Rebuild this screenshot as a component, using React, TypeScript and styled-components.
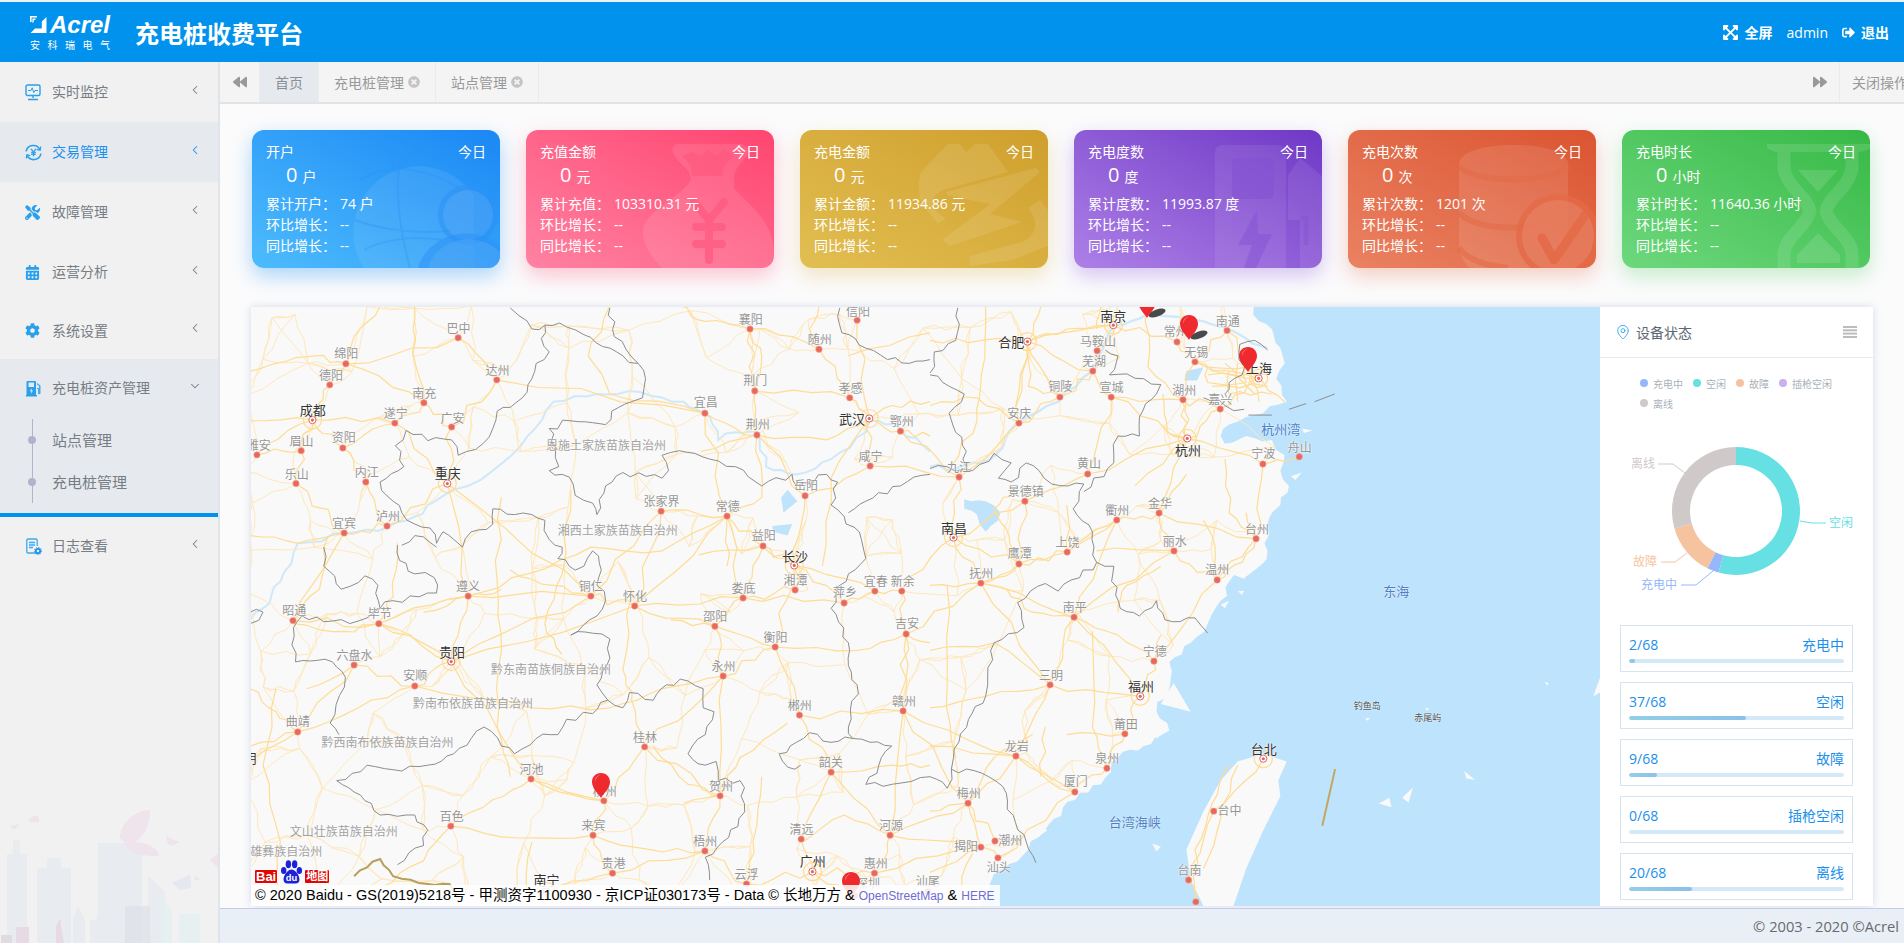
import React from "react";
import styled, { createGlobalStyle } from "styled-components";
import {
  FaBackward,
  FaCalendarAlt,
  FaCog,
  FaExpandArrowsAlt,
  FaForward,
  FaSignOutAlt,
  FaTimesCircle,
  FaTools,
} from "react-icons/fa";
import { ChevronDown, ChevronLeft, MapPin } from "lucide-react";

const GlobalStyle = createGlobalStyle`
  html, body {
    margin: 0;
    padding: 0;
    height: 100%;
    overflow: hidden;
    background: #fff;
    font-family: "Open Sans", "Noto Sans CJK SC", sans-serif;
    font-size: 14px;
  }
  * { box-sizing: border-box; }
`;

// Layout
const Page = styled.div`
  width: 1904px;
  height: 943px;
  display: flex;
  flex-direction: column;
  overflow: hidden;
`;

const Header = styled.header`
  flex: 0 0 62px;
  display: flex;
  align-items: center;
  background: #0092ec;
  border-top: 2px solid #eef2f5;
  color: #fff;
  padding: 0 15px 0 30px;
`;

const LogoBox = styled.div`
  width: 85px;
  display: flex;
  flex-direction: column;
  margin-right: 20px;
`;

const LogoTop = styled.div`
  display: flex;
  align-items: center;
  gap: 3px;
  height: 22px;
`;

const LogoWord = styled.span`
  font-family: "Liberation Sans", sans-serif;
  font-style: italic;
  font-weight: 700;
  font-size: 24px;
  line-height: 22px;
`;

const LogoSub = styled.span`
  font-size: 10px;
  line-height: 12px;
  margin-top: 3px;
  letter-spacing: 7.5px;
  white-space: nowrap;
`;

const Title = styled.h1`
  margin: 0;
  font-size: 24px;
  font-weight: 700;
`;

const HeaderRight = styled.div`
  margin-left: auto;
  display: flex;
  align-items: center;
  font-size: 14px;
`;

const HeaderBold = styled.span`
  font-weight: 700;
  margin-left: 6px;
`;

const HeaderUser = styled.span`
  margin: 0 14px;
`;

const Body = styled.div`
  flex: 1;
  display: flex;
  min-height: 0;
`;

// Sidebar
const Sidebar = styled.aside`
  position: relative;
  flex: 0 0 220px;
  background: #f1f1f1;
  border-right: 2px solid #dfe4e8;
  overflow: hidden;
`;

const SideItem = styled.div<{ $active?: boolean; $height?: number }>`
  position: relative;
  z-index: 1;
  height: ${(p) => p.$height ?? 60}px;
  display: flex;
  align-items: center;
  padding: 0 18px 0 25px;
  background: ${(p) => (p.$active ? "#e6eaef" : "transparent")};
  color: ${(p) => (p.$active ? "#1b90ed" : "#777d85")};
`;

const SideIcon = styled.span`
  width: 27px;
  display: flex;
  align-items: center;
  color: #2a9fea;
  font-size: 15px;
`;

const SideLabel = styled.span`
  flex: 1;
  font-size: 14px;
  margin-top: -2px;
`;

const SideArrow = styled.span`
  display: flex;
  margin-top: -5px;
  margin-right: -2px;
`;

const SideGroup = styled.div`
  position: relative;
  z-index: 1;
  background: #e6eaef;
  height: 158px;
  border-bottom: 4px solid #0092ec;
`;

const SubList = styled.div`
  position: relative;
  margin-top: 2px;
  height: 84px;
  &::before {
    content: "";
    position: absolute;
    left: 32px;
    top: 0;
    bottom: 0;
    width: 1px;
    background: #b3b3cc;
  }
`;

const SubItem = styled.div`
  position: relative;
  height: 42px;
  line-height: 42px;
  padding-left: 52px;
  font-size: 15px;
  color: #777d85;
  &::before {
    content: "";
    position: absolute;
    left: 28px;
    top: 17px;
    width: 8px;
    height: 8px;
    border-radius: 50%;
    background: #b3b3cc;
  }
`;

const SideArt = styled.svg`
  position: absolute;
  left: 0;
  bottom: 0;
  width: 218px;
  height: 163px;
  opacity: 0.65;
`;

// Main area
const Main = styled.main`
  flex: 1;
  min-width: 0;
  display: flex;
  flex-direction: column;
`;

const TabBar = styled.div`
  flex: 0 0 42px;
  display: flex;
  background: #f4f4f4;
  border-bottom: 2px solid #dfe4e8;
  color: #999;
  font-size: 14px;
`;

const TabArrow = styled.div`
  flex: none;
  width: 40px;
  display: flex;
  align-items: center;
  justify-content: center;
  color: #999;
  font-size: 14px;
  border-right: 1px solid #ebebeb;
`;

const Tab = styled.div<{ $active?: boolean }>`
  display: flex;
  align-items: center;
  gap: 4px;
  padding: 0 15px;
  background: ${(p) => (p.$active ? "#e6eaef" : "transparent")};
  border-right: 1px solid #ebebeb;
  color: ${(p) => (p.$active ? "#8a8f96" : "#999")};
  svg {
    color: #c4c4c4;
    font-size: 12px;
  }
`;

const TabRight = styled.div`
  margin-left: auto;
  display: flex;
  width: 104px;
  overflow: hidden;
`;

const CloseOps = styled.div`
  flex: none;
  display: flex;
  align-items: center;
  padding-left: 12px;
  white-space: nowrap;
`;

const Content = styled.div`
  flex: 1;
  min-height: 0;
  background: #fbfbfc;
  padding: 26px 0 0 31px;
  overflow: hidden;
`;

const CardRow = styled.div`
  display: flex;
  gap: 26px;
  margin-left: 1px;
`;

const Card = styled.div<{ $from: string; $to: string; $glow: string }>`
  position: relative;
  width: 248px;
  height: 138px;
  padding: 12px 14px;
  border-radius: 12px;
  color: #fff;
  background: linear-gradient(to top right, ${(p) => p.$from}, ${(p) => p.$to});
  box-shadow: 0 8px 20px ${(p) => p.$glow};
`;

const CardArt = styled.svg`
  position: absolute;
  left: 0;
  top: 0;
  width: 248px;
  height: 138px;
  border-radius: 12px;
`;

const CardHead = styled.div`
  position: relative;
  display: flex;
  justify-content: space-between;
  line-height: 20px;
`;

const CardNow = styled.div`
  position: relative;
  display: flex;
  align-items: baseline;
  gap: 5px;
  padding-left: 20px;
  height: 28px;
  margin: -1px 0 4px;
  line-height: 28px;
`;

const CardNum = styled.span`
  font-size: 20px;
`;

const CardLine = styled.div`
  position: relative;
  display: flex;
  line-height: 21px;
  white-space: nowrap;
`;

const CardKey = styled.span`
  width: 74px;
`;

const MapPanel = styled.div`
  display: flex;
  width: 1622px;
  height: 599px;
  margin-top: 39px;
  background: #fff;
  box-shadow: 0 0 8px rgba(110, 135, 175, 0.28);
`;

const MapCanvas = styled.div`
  position: relative;
  flex: 0 0 1349px;
  height: 599px;
  overflow: hidden;
  background: #f9f9f9;
`;

const MapLayer = styled.svg`
  position: absolute;
  left: 0;
  top: 0;
`;

const CityName = styled.span<{ $cap?: boolean }>`
  position: absolute;
  transform: translate(-50%, -50%);
  font-size: ${(p) => (p.$cap ? 13 : 12)}px;
  line-height: 14px;
  white-space: nowrap;
  color: ${(p) => (p.$cap ? "#333" : "#969696")};
  text-shadow: 0 0 2px #fff, 0 0 2px #fff;
`;

const RegionName = styled.span`
  position: absolute;
  transform: translate(-50%, -50%);
  font-size: 12px;
  line-height: 14px;
  white-space: nowrap;
  color: #a2a2a2;
  text-shadow: 0 0 2px #fff;
`;

const SeaName = styled.span<{ $small?: boolean }>`
  position: absolute;
  transform: translate(-50%, -50%);
  font-size: ${(p) => (p.$small ? 9 : 13)}px;
  line-height: 14px;
  white-space: nowrap;
  color: ${(p) => (p.$small ? "#555" : "#4f7fc6")};
  text-shadow: 0 0 2px #fff;
`;

const Pin = styled.svg`
  position: absolute;
  width: 20px;
  height: 26px;
  overflow: visible;
  transform: translate(-50%, -100%);
`;

const BaiduLogo = styled.div`
  position: absolute;
  left: 3px;
  bottom: 22px;
  display: flex;
  align-items: flex-end;
  gap: 0;
  height: 25px;
  font-family: "Liberation Sans", "Noto Sans CJK SC", sans-serif;
  font-weight: 700;
`;

const BaiduWord = styled.span`
  padding: 0 1px;
  background: #e10601;
  border: 1px solid #fff;
  border-radius: 2px;
  color: #fff;
  font-size: 13px;
  line-height: 13px;
`;

const BaiduMap = styled.span`
  padding: 0 1px;
  background: #e10601;
  border: 1px solid #fff;
  border-radius: 2px;
  color: #fff;
  font-size: 11px;
  line-height: 13px;
`;

const CopyRight = styled.div`
  position: absolute;
  left: 0;
  bottom: 0;
  width: 749px;
  height: 21px;
  padding-left: 4px;
  background: rgba(255, 255, 255, 0.85);
  font-family: "Liberation Sans", "Noto Sans CJK SC", sans-serif;
  font-size: 14.5px;
  line-height: 21px;
  color: #000;
  white-space: nowrap;
`;

const CopyLink = styled.span`
  font-size: 12px;
  color: #6f6cd3;
`;

// Status panel
const StatusPanel = styled.div`
  flex: 1;
  min-width: 0;
  display: flex;
  flex-direction: column;
`;

const StatusHead = styled.div`
  height: 51px;
  display: flex;
  align-items: center;
  padding: 0 16px 0 15px;
  border-bottom: 1px solid #e7eaee;
  color: #5c6773;
  font-size: 14px;
`;

const StatusTitle = styled.span`
  flex: 1;
  margin-left: 5px;
`;

const Legend = styled.div`
  display: flex;
  flex-wrap: wrap;
  gap: 0 10px;
  padding: 15px 30px 0 40px;
`;

const LegendItem = styled.div`
  display: flex;
  align-items: center;
  gap: 5px;
  height: 20px;
  font-size: 10px;
  color: #a9b1ba;
`;

const LegendDot = styled.i<{ $color: string }>`
  width: 8px;
  height: 8px;
  border-radius: 50%;
  background: ${(p) => p.$color};
`;

const DonutBox = styled.svg`
  display: block;
  width: 272px;
  height: 212px;
`;

const StatList = styled.div`
  display: flex;
  flex-direction: column;
  gap: 10px;
  margin: 0 20px;
`;

const StatBox = styled.div`
  height: 47px;
  padding: 8px 8px 0;
  border: 1px solid #d7e3ef;
  color: #1b90ed;
  font-size: 14px;
`;

const StatText = styled.div`
  display: flex;
  justify-content: space-between;
  line-height: 22px;
`;

const StatTrack = styled.div`
  height: 4px;
  margin-top: 3px;
  border-radius: 2px;
  background: #d3e9f7;
  overflow: hidden;
`;

const StatFill = styled.div`
  height: 100%;
  border-radius: 2px;
  background: linear-gradient(to right, #92cfe6, #8cc0ea);
`;

const Footer = styled.footer`
  flex: 0 0 35px;
  padding-right: 5px;
  background: #e8eff7;
  border-top: 1px solid #c5cbe6;
  text-align: right;
  line-height: 34px;
  font-size: 14.7px;
  color: #686b6d;
`;

// Map data: positions traced in two grids, then projected to map pixels
type Pt = [number, number];
const w = (x: number, y: number): Pt => [x / 2.306 - 1, y / 2.613 - 1];
const e = (x: number, y: number): Pt => [679 + x / 2.34, y / 2.613 - 1];

const rnd = (n: number) => {
  const v = Math.sin(n * 12.9898) * 43758.5453;
  return v - Math.floor(v);
};

const toPts = (fn: (x: number, y: number) => Pt, list: number[]) => {
  const out: Pt[] = [];
  for (let i = 0; i < list.length; i += 2) out.push(fn(list[i], list[i + 1]));
  return out;
};

const str = (list: Pt[]) => list.map((p) => `${p[0].toFixed(1)},${p[1].toFixed(1)}`).join(" ");
const pts = (fn: (x: number, y: number) => Pt, list: number[]) => str(toPts(fn, list));

// breaks each segment up so borders and roads do not run dead straight
const wiggle = (list: Pt[], amp: number, seed: number, parts = 3) => {
  const out: Pt[] = [list[0]];
  for (let i = 1; i < list.length; i++) {
    const a = list[i - 1];
    const b = list[i];
    const dx = b[0] - a[0];
    const dy = b[1] - a[1];
    const len = Math.hypot(dx, dy) || 1;
    const steps = Math.max(1, Math.round(Math.min(len / 8, parts)));
    for (let k = 1; k < steps; k++) {
      const t = k / steps;
      const off = (rnd(seed + i * 31 + k * 7) - 0.5) * 2 * amp;
      out.push([a[0] + dx * t - (dy / len) * off, a[1] + dy * t + (dx / len) * off]);
    }
    out.push(b);
  }
  return out;
};

type City = [string, number, number, number, number, number?];

const westCities: City[] = [
  ["巴中", 480, 83, 481, 60], ["绵阳", 221, 151, 222, 126], ["德阳", 184, 206, 187, 183],
  ["达州", 569, 193, 571, 170], ["南充", 401, 253, 402, 231], ["成都", 144, 298, 145, 271, 1],
  ["遂宁", 334, 306, 336, 281], ["广安", 465, 316, 467, 294], ["雅安", 16, 389, 20, 366],
  ["眉山", 118, 378, 119, 355], ["资阳", 214, 371, 216, 346], ["乐山", 106, 464, 108, 441],
  ["内江", 267, 460, 269, 437], ["重庆", 455, 464, 456, 436, 1], ["宜宾", 217, 593, 217, 570],
  ["泸州", 316, 575, 318, 551], ["昭通", 99, 822, 102, 797], ["毕节", 297, 830, 299, 804],
  ["遵义", 503, 758, 503, 735], ["铜仁", 786, 758, 786, 733], ["怀化", 887, 784, 888, 760],
  ["贵阳", 464, 929, 466, 904, 1], ["六盘水", 240, 938, 241, 915], ["安顺", 380, 993, 381, 968],
  ["曲靖", 110, 1113, 110, 1088], ["昆明", -30, 1210, -15, 1180, 1], ["河池", 648, 1236, 649, 1213],
  ["柳州", 816, 1293, 818, 1270], ["桂林", 910, 1152, 911, 1128], ["百色", 463, 1359, 465, 1335],
  ["来宾", 791, 1383, 792, 1358], ["贺州", 1084, 1280, 1086, 1257], ["贵港", 836, 1482, 838, 1458],
  ["梧州", 1049, 1424, 1050, 1401], ["南宁", 684, 1530, 684, 1499, 1], ["云浮", 1145, 1510, 1145, 1488],
  ["广州", 1297, 1478, 1298, 1451, 1], ["韶关", 1340, 1218, 1339, 1194], ["清远", 1271, 1393, 1272, 1369],
  ["河源", 1476, 1383, 1478, 1359], ["惠州", 1440, 1482, 1443, 1457], ["深圳", 1395, 1540, 1425, 1510],
  ["郴州", 1267, 1069, 1268, 1044], ["永州", 1091, 967, 1092, 942], ["衡阳", 1211, 891, 1212, 867],
  ["邵阳", 1072, 837, 1073, 813], ["娄底", 1137, 763, 1138, 740], ["湘潭", 1257, 742, 1258, 718],
  ["长沙", 1255, 678, 1257, 652, 1], ["益阳", 1183, 627, 1185, 602], ["常德", 1100, 549, 1102, 524],
  ["张家界", 948, 536, 949, 511], ["岳阳", 1280, 496, 1282, 471], ["咸宁", 1430, 418, 1431, 394],
  ["鄂州", 1500, 327, 1503, 303], ["武汉", 1428, 294, 1388, 295, 1], ["孝感", 1383, 240, 1385, 217],
  ["荆州", 1169, 337, 1171, 312], ["荆门", 1164, 222, 1165, 197], ["宜昌", 1049, 280, 1051, 254],
  ["襄阳", 1153, 60, 1155, 36], ["随州", 1312, 113, 1314, 90], ["信阳", 1400, 37, 1402, 15],
  ["萍乡", 1370, 776, 1372, 751], ["宜春", 1441, 745, 1443, 720], ["新余", 1503, 745, 1505, 720],
  ["吉安", 1513, 857, 1515, 832], ["赣州", 1506, 1058, 1508, 1035],
];

const eastCities: City[] = [
  ["南京", 429, 50, 429, 26, 1], ["合肥", 228, 93, 190, 93, 1], ["马鞍山", 391, 117, 393, 93],
  ["芜湖", 381, 170, 384, 146], ["铜陵", 304, 238, 305, 212], ["宣城", 424, 238, 425, 213],
  ["安庆", 208, 306, 209, 282], ["常州", 578, 94, 575, 68], ["无锡", 620, 146, 623, 122],
  ["南通", 695, 64, 697, 41], ["上海", 769, 189, 770, 163, 1], ["湖州", 592, 245, 595, 221],
  ["嘉兴", 679, 269, 679, 245], ["杭州", 602, 346, 604, 376, 1], ["宁波", 779, 413, 780, 388],
  ["舟山", 864, 394, 865, 371], ["黄山", 369, 439, 372, 414], ["九江", 68, 447, 68, 423],
  ["景德镇", 222, 510, 224, 487], ["衢州", 437, 559, 438, 535], ["金华", 536, 541, 538, 517],
  ["南昌", 55, 605, 56, 579, 1], ["上饶", 321, 643, 322, 618], ["鹰潭", 208, 674, 210, 649],
  ["丽水", 571, 640, 573, 616], ["台州", 763, 608, 765, 586], ["温州", 672, 716, 672, 691],
  ["抚州", 119, 724, 120, 699], ["南平", 337, 813, 339, 790], ["宁德", 524, 928, 526, 903],
  ["三明", 281, 990, 283, 966], ["福州", 492, 1020, 494, 994, 1], ["莆田", 456, 1118, 458, 1094],
  ["龙岩", 201, 1176, 203, 1153], ["泉州", 414, 1208, 415, 1184], ["厦门", 339, 1270, 341, 1245],
  ["梅州", 89, 1299, 91, 1275], ["揭阳", 119, 1414, 84, 1414], ["潮州", 152, 1398, 188, 1397],
  ["汕头", 159, 1442, 161, 1469], ["汕尾", -5, 1530, -5, 1505], ["台北", 780, 1183, 781, 1157, 1],
  ["台中", 664, 1320, 701, 1320], ["台南", 605, 1500, 607, 1476], ["高雄", 622, 1557, 622, 1640],
];

const regions: [string, number, number][] = [
  ["恩施土家族苗族自治州", 821, 367], ["湘西土家族苗族自治州", 848, 587],
  ["黔东南苗族侗族自治州", 694, 950], ["黔南布依族苗族自治州", 514, 1041],
  ["黔西南布依族苗族自治州", 317, 1143], ["文山壮族苗族自治州", 216, 1374],
  ["楚雄彝族自治州", 70, 1426],
];

const capitals = new Set([...westCities, ...eastCities].filter((c) => c[5]).map((c) => c[0]));

const nodes: Record<string, Pt> = {};
westCities.forEach((c) => { nodes[c[0]] = w(c[1], c[2]); });
eastCities.forEach((c) => { nodes[c[0]] = e(c[1], c[2]); });

const chains = [
  "成都,德阳,绵阳,巴中", "成都,遂宁,重庆", "成都,资阳,内江,泸州", "成都,眉山,乐山,宜宾,泸州,重庆",
  "雅安,成都", "雅安,眉山", "绵阳,南充,广安,重庆", "巴中,达州,广安", "南充,遂宁,资阳", "达州,宜昌",
  "重庆,遵义,贵阳,安顺,六盘水,曲靖,昆明", "毕节,贵阳", "昭通,毕节,遵义", "昭通,宜宾", "重庆,铜仁,怀化,邵阳,衡阳",
  "贵阳,铜仁", "贵阳,怀化,娄底,湘潭,长沙", "贵阳,河池,柳州,来宾,贵港,南宁", "柳州,桂林,永州,衡阳,长沙,岳阳,咸宁,武汉",
  "桂林,贺州,梧州,贵港", "衡阳,郴州,韶关,清远,广州,深圳", "广州,云浮,梧州", "广州,惠州,河源,赣州,吉安,新余,宜春,萍乡,长沙",
  "萍乡,娄底", "武汉,孝感,随州,襄阳,荆门,荆州,宜昌", "武汉,鄂州,九江,南昌", "宜昌,常德,益阳,长沙", "张家界,常德",
  "张家界,怀化", "荆州,岳阳", "常德,娄底,邵阳,永州", "信阳,武汉", "南昌,新余", "南昌,抚州,三明",
  "南昌,鹰潭,上饶,衢州,金华,杭州,嘉兴,上海", "鹰潭,抚州", "三明,福州", "南昌,景德镇,黄山,杭州",
  "九江,安庆,合肥,南京,常州,无锡,上海", "安庆,铜陵,芜湖,马鞍山,南京", "合肥,芜湖,宣城,湖州,无锡,南通", "南通,上海",
  "湖州,杭州,宁波,舟山", "宁波,台州,温州,宁德,福州,莆田,泉州,厦门,汕头,揭阳,惠州,深圳", "潮州,梅州,龙岩,厦门",
  "龙岩,三明,南平,丽水,金华", "南平,福州", "丽水,温州", "赣州,龙岩", "赣州,梅州,河源", "台北,台中,台南,高雄",
  "衢州,南平", "黄山,宣城", "景德镇,鹰潭", "吉安,赣州,郴州", "吉安,抚州", "金华,台州", "抚州,南平", "揭阳,河源",
  "孝感,荆门", "咸宁,九江", "长沙,宜春", "益阳,娄底", "永州,贺州", "韶关,河源", "合肥,安庆", "铜陵,合肥",
  "嘉兴,湖州", "宣城,杭州", "铜仁,张家界", "怀化,常德", "遵义,铜仁",
];

const westRoads = [
  [0, 170, 60, 150, 150, 130, 221, 151], [0, 300, 144, 298], [0, 600, 110, 620, 217, 593], [300, 0, 240, 80, 221, 151],
  [380, 0, 375, 120, 401, 253], [830, 0, 780, 130, 830, 230, 1049, 280], [990, 0, 1050, 40, 1153, 60],
  [1153, 60, 1180, 130, 1164, 222], [1169, 337, 1180, 500, 1100, 549], [1312, 0, 1290, 60, 1312, 113], [1568, 250, 1480, 260, 1428, 294],
  [1568, 340, 1500, 327], [0, 1000, 60, 1060, 110, 1113, 0, 1150], [110, 1113, 250, 1050, 380, 993], [380, 993, 650, 1050, 830, 1050, 950, 1000, 1091, 967],
  [60, 1000, 30, 1200, 70, 1400, 60, 1568], [463, 1359, 560, 1290, 648, 1236], [463, 1359, 620, 1390, 791, 1383], [463, 1359, 400, 1450, 300, 1520],
  [791, 1383, 920, 1420, 1049, 1424], [600, 690, 700, 730, 786, 758], [503, 758, 640, 700, 786, 630, 950, 640, 1100, 549],
  [580, 500, 570, 720, 580, 900, 570, 1100, 600, 1230], [740, 480, 720, 700, 680, 830, 720, 910], [880, 760, 860, 950, 880, 1030, 910, 1152],
  [1000, 1300, 1084, 1280, 1130, 1180, 1240, 1090], [1180, 1230, 1160, 1400, 1145, 1510], [1276, 1400, 1370, 1330, 1476, 1383],
  [1568, 880, 1513, 857, 1400, 900, 1211, 891], [1568, 1200, 1480, 1200, 1340, 1218], [1320, 680, 1340, 450, 1428, 294], [970, 820, 1072, 837],
  [1100, 680, 1100, 549], [1035, 650, 1183, 627, 1255, 678], [100, 830, 220, 850, 297, 830, 430, 900, 464, 929], [130, 1000, 240, 938],
  [400, 800, 503, 758, 580, 740], [180, 600, 160, 740, 99, 822], [340, 620, 330, 760, 297, 830], [640, 1236, 820, 1293], [650, 1400, 630, 1568],
  [930, 1152, 1010, 1250, 1084, 1280], [1380, 130, 1568, 70], [1040, 380, 1169, 337, 1330, 350, 1428, 294],
];

const eastRoads = [
  [0, 90, 120, 90, 228, 93, 320, 60, 429, 50], [130, 0, 120, 180, 110, 300, 50, 420], [0, 260, 110, 240, 208, 306], [260, 0, 228, 93, 230, 210, 304, 238],
  [505, 0, 510, 160, 592, 245], [400, 0, 390, 60], [600, 250, 600, 346], [545, 230, 555, 330, 602, 346], [620, 146, 660, 170, 769, 189],
  [650, 160, 650, 200, 740, 200, 740, 160, 650, 160], [700, 170, 700, 230, 800, 230], [760, 180, 830, 250], [0, 730, 119, 724, 208, 674, 321, 643, 437, 559],
  [0, 900, 150, 880, 281, 990], [0, 1050, 130, 1020, 281, 990], [0, 1150, 201, 1176, 339, 1270], [40, 730, 40, 1000, 60, 1180], [180, 740, 240, 800, 337, 813],
  [380, 850, 380, 1100, 414, 1208], [540, 860, 524, 928], [337, 813, 440, 860, 524, 928], [740, 540, 763, 608, 730, 670, 672, 716], [690, 400, 700, 540, 763, 608],
  [600, 440, 540, 541], [480, 470, 602, 346], [390, 640, 571, 640], [640, 560, 660, 600, 672, 716], [540, 680, 460, 730, 440, 800], [0, 1320, 89, 1299, 119, 1414],
  [100, 1430, 60, 1560], [0, 1480, 119, 1414], [700, 1200, 660, 1300, 620, 1420, 622, 1557], [720, 1200, 680, 1340, 640, 1470], [240, 1120, 150, 1180, 89, 1299],
  [320, 1120, 456, 1118], [270, 1100, 260, 1230], [200, 480, 150, 530, 185, 600, 210, 674], [320, 520, 321, 643],
  [690, 150, 760, 230], [650, 180, 790, 180], [720, 150, 720, 250], [660, 210, 790, 210], [740, 130, 770, 250],
];

const provinceWest = [
  [600, 5, 620, 25, 650, 60, 680, 50, 672, 85, 690, 120, 660, 150, 650, 190, 628, 240, 600, 265, 570, 275, 560, 320, 520, 375, 480, 390, 465, 350, 410, 352, 360, 325, 335, 365, 355, 420, 300, 460, 330, 510, 350, 540, 380, 570, 415, 580, 430, 620, 445, 590, 470, 610, 490, 630, 510, 590, 560, 570, 560, 530, 610, 545, 650, 545, 680, 560, 690, 610, 720, 630, 710, 660, 750, 690, 770, 680, 790, 640, 810, 690, 800, 730, 820, 770, 800, 810, 740, 860, 790, 855, 830, 870, 830, 920, 800, 990, 825, 1030, 860, 1050, 875, 1010, 930, 1030, 960, 990, 1010, 980, 1045, 1000, 1045, 1050, 1070, 1060, 1050, 1120, 1010, 1170, 1050, 1200, 1075, 1190, 1080, 1240, 1130, 1240, 1140, 1300, 1125, 1360, 1090, 1400, 1050, 1440, 1060, 1500],
  [680, 50, 730, 55, 770, 75, 830, 110, 860, 130, 895, 150, 912, 190, 905, 240, 880, 250, 850, 265, 820, 310, 790, 305, 740, 300, 690, 320, 705, 370, 712, 420, 690, 430, 720, 440, 745, 465, 750, 495, 790, 515, 800, 545, 820, 470, 860, 435, 950, 450, 965, 430, 950, 390, 990, 378, 1060, 400, 1120, 420, 1180, 470, 1250, 440, 1260, 470, 1330, 440, 1355, 460, 1340, 520, 1370, 550, 1410, 610, 1420, 660, 1380, 700, 1340, 790, 1380, 880, 1380, 940, 1400, 990, 1380, 1100, 1390, 1130, 1340, 1140, 1290, 1115, 1260, 1140, 1220, 1170, 1240, 1205, 1270, 1200],
  [1390, 1130, 1430, 1140, 1480, 1150, 1450, 1200, 1420, 1250, 1460, 1255, 1568, 1230],
  [0, 800, 30, 800, 0, 830], [120, 810, 170, 825, 230, 830, 270, 815, 300, 790, 295, 730, 265, 705, 210, 740, 170, 680, 170, 630],
  [340, 625, 345, 665, 380, 700, 425, 710, 430, 750, 330, 770, 300, 790], [350, 625, 380, 600, 430, 630],
  [120, 810, 100, 840, 105, 930, 190, 930, 220, 970, 185, 1090, 205, 1120],
  [825, 1030, 790, 1065, 730, 1080, 710, 1120, 660, 1130, 610, 1170, 580, 1150, 540, 1100, 510, 1130, 470, 1170, 410, 1200, 350, 1215, 270, 1200, 200, 1240, 240, 1270, 280, 1300, 300, 1330, 380, 1330, 410, 1370, 400, 1410, 340, 1460],
  [1360, 5, 1365, 70, 1420, 110, 1470, 140, 1520, 150, 1568, 140], [1568, 440, 1500, 470, 1420, 510, 1380, 540], [830, 5, 840, 80, 895, 150],
];

const provinceEast = [
  [65, 5, 60, 90, 10, 120, 0, 175], [0, 180, 30, 200, 80, 230, 45, 280, 60, 330, 85, 380, 85, 420],
  [0, 425, 40, 420, 100, 430, 150, 385, 190, 410, 160, 450, 190, 460, 225, 410, 255, 430, 285, 465, 360, 465, 335, 530, 380, 590, 390, 670, 430, 680, 425, 720, 445, 790, 490, 810, 530, 770, 550, 820, 620, 815, 650, 855],
  [360, 485, 430, 410, 440, 340, 490, 340, 490, 290, 530, 230, 540, 205, 500, 190, 420, 180, 440, 130, 410, 115],
  [390, 670, 350, 710, 300, 745, 270, 725, 235, 745, 205, 775, 220, 840, 150, 880, 135, 990, 130, 1020, 90, 1080, 55, 1180, 50, 1210, 120, 1220, 170, 1255, 200, 1350, 225, 1400, 248, 1455],
  [0, 1230, 40, 1260, 50, 1210], [690, 230, 700, 200, 730, 180, 725, 100, 760, 90, 790, 115], [640, 240, 690, 260, 735, 270],
];

const maritime = [[745, 285, 800, 285], [840, 270, 880, 255], [900, 250, 947, 230]];

const seaCoast = [
  758, 0, 770, 40, 800, 60, 820, 110, 830, 150, 810, 190, 835, 250, 780, 280, 740, 290, 700, 310, 680, 340, 690, 360, 740, 340, 800, 350, 830, 390, 820, 430, 840, 470, 820, 520, 790, 560, 790, 640, 760, 690, 700, 720, 680, 770, 650, 830, 610, 880, 560, 930, 560, 1000, 530, 1060, 560, 1110, 500, 1150, 440, 1180, 400, 1250, 340, 1290, 290, 1340, 230, 1420, 170, 1470, 140, 1510, 120, 1568, 1568, 1568, 1568, 0,
];

const taiwan = [780, 1170, 835, 1190, 815, 1240, 820, 1280, 780, 1370, 740, 1470, 710, 1568, 640, 1568, 610, 1500, 600, 1420, 640, 1320, 680, 1240, 720, 1190];

const islands = [
  [1250, 1215, 1275, 1238, 1255, 1235], [1050, 1300, 1075, 1285, 1080, 1310], [1130, 1258, 1120, 1298, 1105, 1285], [1438, 982, 1448, 985, 1444, 992],
  [1568, 970, 1552, 1020, 1568, 1010], [520, 1405, 540, 1412, 530, 1425], [845, 445, 870, 435, 855, 455], [720, 745, 735, 745, 730, 755], [725, 695, 745, 690, 735, 715],
  [1160, 1050, 1168, 1052, 1162, 1058], [1018, 1078, 1030, 1076, 1024, 1084], [870, 320, 895, 325, 875, 332], [250, 1360, 275, 1370, 255, 1385], [510, 1100, 560, 1105, 530, 1130],
  [610, 1060, 570, 985, 540, 1040], [680, 780, 700, 770, 690, 790], [770, 550, 800, 530, 790, 570],
];

const yangtzeWest = [0, 820, 30, 790, 70, 720, 110, 620, 220, 595, 320, 575, 380, 550, 440, 500, 560, 430, 640, 340, 700, 250, 800, 230, 900, 225, 1000, 250, 1060, 290, 1080, 350, 1120, 330, 1170, 330, 1190, 420, 1260, 440, 1340, 400, 1420, 330, 1430, 300, 1500, 320, 1568, 380];
const yangtzeEast = [0, 420, 60, 425, 120, 410, 170, 370, 200, 310, 300, 250, 380, 170, 430, 50, 510, 20, 640, 40, 740, 85, 790, 110];

// minor roads: a loose grid of towns tied to their nearest neighbours
const seaPoly = toPts(e, seaCoast);
const inSea = (p: Pt) => {
  let inside = false;
  for (let i = 0, j = seaPoly.length - 1; i < seaPoly.length; j = i++) {
    const a = seaPoly[i];
    const b = seaPoly[j];
    if (a[1] > p[1] !== b[1] > p[1] && p[0] < ((b[0] - a[0]) * (p[1] - a[1])) / (b[1] - a[1]) + a[0]) inside = !inside;
  }
  return inside;
};

const buildMinorRoads = () => {
  const towns: Pt[] = [];
  let seed = 1;
  for (let y = 8; y < 600; y += 48) {
    for (let x = 6; x < 1110; x += 54) {
      const p: Pt = [x + (rnd(seed) - 0.5) * 36, y + (rnd(seed + 500) - 0.5) * 32];
      seed++;
      if (!inSea(p)) towns.push(p);
    }
  }
  const all = towns.concat(Object.values(nodes).filter((p) => !inSea(p)));
  const out: string[] = [];
  towns.forEach((t, i) => {
    const near = all
      .filter((p) => p !== t)
      .map((p) => ({ p, d: Math.hypot(p[0] - t[0], p[1] - t[1]) }))
      .sort((a, b) => a.d - b.d)
      .slice(0, 3);
    near.forEach((n, k) => {
      if (n.d < 75) out.push(str(wiggle([t, n.p], 3, i * 5 + k, 4)));
    });
  });
  return out;
};

const minorRoads = buildMinorRoads();

const chainRoads = chains.map((c, i) => str(wiggle(c.split(",").map((name) => nodes[name]), 5, i * 3 + 1, 5)));

const pins: { at: Pt; shadow?: boolean }[] = [
  { at: w(810, 1285) }, { at: w(1385, 1545) }, { at: e(507, 32), shadow: true }, { at: e(605, 88), shadow: true }, { at: e(745, 172) },
];

// Donut chart
const donutColors = { busy: "#96b8fb", idle: "#67e0e3", fault: "#f6c3a0", gun: "#c9b0ee", off: "#cfc9c9" };
const legend = [
  { name: "充电中", color: donutColors.busy },
  { name: "空闲", color: donutColors.idle },
  { name: "故障", color: donutColors.fault },
  { name: "插枪空闲", color: donutColors.gun },
  { name: "离线", color: donutColors.off },
];

const slicePath = (cx: number, cy: number, r0: number, r1: number, from: number, to: number) => {
  const at = (r: number, t: number) => `${(cx + r * Math.sin(t)).toFixed(2)} ${(cy - r * Math.cos(t)).toFixed(2)}`;
  const a = (from / 68) * Math.PI * 2;
  const b = (to / 68) * Math.PI * 2;
  const big = b - a > Math.PI ? 1 : 0;
  return `M${at(r1, a)} A${r1} ${r1} 0 ${big} 1 ${at(r1, b)} L${at(r0, b)} A${r0} ${r0} 0 ${big} 0 ${at(r0, a)} Z`;
};

const stats = [
  { count: 2, name: "充电中" },
  { count: 37, name: "空闲" },
  { count: 9, name: "故障" },
  { count: 0, name: "插枪空闲" },
  { count: 20, name: "离线" },
];

// Watermarks behind the card text
const GlobeArt = ({ cut }: { cut: string }) => (
  <>
    <path d="M112 138 A62 62 0 1 1 222 66 L222 138 Z" fill="#fff" opacity=".08" />
    <g fill="none" stroke={cut} strokeOpacity=".35" strokeWidth="2">
      <path d="M155 16 C140 40 145 90 158 138 M108 50 C140 30 180 40 210 60 M103 90 C130 100 170 105 200 100 M112 120 C130 110 160 105 190 110 M135 20 L145 42 L165 18" />
    </g>
    <circle cx="216" cy="85" r="30" fill={cut} opacity=".55" />
    <circle cx="216" cy="85" r="25" fill="#fff" opacity=".09" />
    <path d="M166 138 A50 45 0 0 1 248 115 L248 138 Z" fill={cut} opacity=".55" />
    <path d="M176 138 A42 38 0 0 1 248 122 L248 138 Z" fill="#fff" opacity=".08" />
  </>
);

const BagArt = ({ cut }: { cut: string }) => (
  <>
    <path d="M150 14 H216 L224 18 C222 30 210 34 208 46 L208 58 C225 78 248 90 248 126 V128 A10 10 0 0 1 238 138 H136 C118 120 117 108 117 100 C118 82 152 70 165 50 C165 36 148 34 146 18 Z" fill="#fff" opacity=".1" />
    <path d="M156 26 L166 22 L174 26 L182 20 L190 26 L198 20 L208 26 C200 32 196 38 196 46 H166 C166 38 162 32 156 26 Z" fill={cut} opacity=".7" />
    <g fill="none" stroke={cut} strokeOpacity=".7" strokeWidth="8" strokeLinecap="round">
      <path d="M168 72 L183 90 L198 72 M183 90 V130 M170 97 H196 M170 114 H196" />
    </g>
  </>
);

const BoltArt = () => (
  <path d="M121 42 L148 14 L160 14 L166 22 L175 14 L188 14 L208 42 L150 58 C130 62 125 78 146 88 L138 94 L122 74 C118 66 118 50 121 42 Z M146 62 L236 38 L240 42 L190 84 L222 92 L150 116 L142 110 L190 74 L160 68 C150 66 146 66 146 62 Z M228 78 L240 70 L248 80 V116 L212 130 L170 136 L170 126 L222 112 C236 106 240 92 228 78 Z" fill="#fff" opacity=".1" />
);

const PumpArt = ({ cut }: { cut: string }) => (
  <>
    <path d="M148 15 H204 A8 8 0 0 1 212 23 V138 H141 V22 A7 7 0 0 1 148 15 Z M214 45 L226 28 L248 46 V138 H226 V90 H214 Z" fill="#fff" opacity=".08" />
    <rect x="158" y="28" width="42" height="41" rx="5" fill={cut} opacity=".45" />
    <path d="M183 80 L164 115 H178 L170 138 H182 L198 104 H184 Z" fill={cut} opacity=".45" />
    <path d="M226 88 H232 V115" fill="none" stroke={cut} strokeOpacity=".4" strokeWidth="5" />
  </>
);

const DatabaseArt = ({ cut }: { cut: string }) => (
  <>
    <path d="M111 34 C111 22 135 15 166 15 C197 15 220 22 220 34 V70 C220 100 220 138 200 138 H122 C112 130 111 120 111 110 Z" fill="#fff" opacity=".1" />
    <path d="M111 36 C125 54 205 54 220 36 M111 82 C125 100 175 100 190 94 M111 118 C120 130 140 136 160 138" fill="none" stroke={cut} strokeOpacity=".6" strokeWidth="6" />
    <circle cx="210" cy="106" r="42" fill={cut} opacity=".8" />
    <circle cx="210" cy="106" r="36" fill="#fff" opacity=".1" />
    <path d="M194 108 L206 130 L238 84" fill="none" stroke={cut} strokeOpacity=".85" strokeWidth="9" strokeLinecap="round" strokeLinejoin="round" />
  </>
);

const HourglassArt = () => (
  <>
    <path d="M145 14 H248 V18 C244 22 236 22 236 22 H156 C152 22 148 20 145 18 Z" fill="#fff" opacity=".12" />
    <path d="M162 22 V38 C165 58 185 66 188 81 C185 96 162 108 162 124 V138 M230 22 V38 C227 58 207 66 204 81 C207 96 230 108 230 124 V138" fill="none" stroke="#fff" strokeOpacity=".11" strokeWidth="13" />
    <path d="M176 40 H216 L196 62 Z M196 103 L175 125 V133 H218 V125 Z" fill="#fff" opacity=".12" />
  </>
);

const cards = [
  { title: "开户", unit: "户", key: "累计开户", total: "74 户", from: "#4dbcfc", to: "#1a87f5", glow: "rgba(60,160,250,.42)", art: <GlobeArt cut="#2b92f6" /> },
  { title: "充值金额", unit: "元", key: "累计充值", total: "103310.31 元", from: "#ff82a2", to: "#ff4570", glow: "rgba(255,90,130,.34)", art: <BagArt cut="#ff587f" /> },
  { title: "充电金额", unit: "元", key: "累计金额", total: "11934.86 元", from: "#e2be52", to: "#cf9f2c", glow: "rgba(220,180,70,.32)", art: <BoltArt /> },
  { title: "充电度数", unit: "度", key: "累计度数", total: "11993.87 度", from: "#ad80e7", to: "#6f38c6", glow: "rgba(140,90,225,.34)", art: <PumpArt cut="#8150d2" /> },
  { title: "充电次数", unit: "次", key: "累计次数", total: "1201 次", from: "#ea8262", to: "#db5430", glow: "rgba(230,110,70,.32)", art: <DatabaseArt cut="#e36a47" /> },
  { title: "充电时长", unit: "小时", key: "累计时长", total: "11640.36 小时", from: "#6dd87d", to: "#37b946", glow: "rgba(85,205,100,.32)", art: <HourglassArt /> },
];

// Sidebar icons that the icon packages do not have
const MonitorIcon = () => (
  <svg width="16" height="17" viewBox="0 0 16 17" fill="none" stroke="#2a9fea" strokeWidth="1.4">
    <rect x="1" y="1" width="14" height="10.5" rx="1.5" />
    <path d="M3 6.5 H6 L7.2 3.8 L8.8 8.6 L10 6.5 H13" strokeWidth="1" />
    <path d="M8 11.5 V14 M3 15.5 H13" />
  </svg>
);

const ExchangeIcon = () => (
  <svg width="17" height="17" viewBox="0 0 16 16" fill="none" stroke="#2a9fea" strokeWidth="1.5">
    <path d="M1 7 A7 7 0 0 1 14 5 M15 9 A7 7 0 0 1 2 11" />
    <path d="M14.8 2.5 L14.2 5.8 L11 5 M1.2 13.5 L1.8 10.2 L5 11" strokeWidth="1.2" />
    <path d="M5.6 4.6 L8 7.4 L10.4 4.6 M8 7.4 V11.6 M5.8 8 H10.2 M5.8 9.8 H10.2" strokeWidth="1.2" />
  </svg>
);

const PumpIcon = () => (
  <svg width="17" height="17" viewBox="0 0 17 17" fill="#2a9fea">
    <path d="M2.5 1 H10 A1 1 0 0 1 11 2 V15 H12 V16.5 H1 V15 H1.5 V2 A1 1 0 0 1 2.5 1 Z M3.5 2.6 V7 H9 V2.6 Z" fillRule="evenodd" />
    <path d="M12 3 L15.5 5.5 V13 A1.2 1.2 0 0 1 13 13 V9 H12 V8 H14 V6 L12 4.5 Z" opacity=".85" />
    <path d="M6.8 8 L4.8 11.2 H6.3 L5.8 14 L8 10.6 H6.6 Z" fill="#e6eaef" />
  </svg>
);

const LogIcon = () => (
  <svg width="17" height="17" viewBox="0 0 17 17" fill="none" stroke="#3aaaf0" strokeWidth="1.3">
    <path d="M11 15 H3 A1.2 1.2 0 0 1 1.8 13.8 V2.2 A1.2 1.2 0 0 1 3 1 H11 A1.2 1.2 0 0 1 12.2 2.2 V8" />
    <path d="M4 4.5 H10 M4 7 H10 M4 9.5 H8" />
    <circle cx="13" cy="13" r="2.2" strokeWidth="1.8" stroke="#1d93e8" />
    <circle cx="13" cy="13" r="3.6" strokeWidth="1" strokeDasharray="1.2 1.2" stroke="#1d93e8" />
  </svg>
);

const sideTop = [
  { label: "实时监控", icon: <MonitorIcon /> },
  { label: "交易管理", icon: <ExchangeIcon />, active: true },
  { label: "故障管理", icon: <FaTools /> },
  { label: "运营分析", icon: <FaCalendarAlt /> },
  { label: "系统设置", icon: <FaCog />, height: 57 },
];

const App = () => {
  return (
    <Page>
      <GlobalStyle />
      <Header>
        <LogoBox>
          <LogoTop>
            <svg width="17" height="18" viewBox="0 0 17 18" fill="#fff">
              <path d="M0 0 H7 V1.6 H1.6 V6 H0 Z M2.4 2.6 H6 L5 4 H3.8 V6 L2.4 7 Z" />
              <path d="M16.5 1 V17 H0.5 L5 12.4 H11.8 V5.6 Z" />
            </svg>
            <LogoWord>Acrel</LogoWord>
          </LogoTop>
          <LogoSub>安科瑞电气</LogoSub>
        </LogoBox>
        <Title>充电桩收费平台</Title>
        <HeaderRight>
          <FaExpandArrowsAlt size={17} />
          <HeaderBold>全屏</HeaderBold>
          <HeaderUser>admin</HeaderUser>
          <FaSignOutAlt size={13} />
          <HeaderBold>退出</HeaderBold>
        </HeaderRight>
      </Header>
      <Body>
        <Sidebar>
          <SideArt viewBox="0 0 218 163">
            <g fill="#dfe5ef" opacity=".7">
              <path d="M7 163 V74 H13 V60 H20 V74 H27 V163 Z" />
              <path d="M37 163 V88 H47 V78 H61 V88 H71 V163 Z" />
              <path d="M73 163 V140 L78 126 L85 140 V163 Z" />
              <path d="M90 163 V140 H97 V135 H105 V140 H109 V163 Z" />
              <rect x="98" y="63" width="44" height="100" />
              <path d="M148 96 L165 112 V163 H148 Z" />
            </g>
            <rect x="125" y="126" width="25" height="37" fill="#d4d9e6" opacity=".7" />
            <rect x="16" y="147" width="13" height="16" fill="#e4cfe0" />
            <rect x="1" y="155" width="11" height="8" fill="#d6d2da" />
            <path d="M56 163 V146 L59 140 H61 V146 L64 163 Z" fill="#e4cfe0" />
            <path d="M160 117 L172 130 V163 H160 Z M179 163 V134 H200 V163 Z" fill="#dff0f0" opacity=".8" />
            <g fill="#eeddea">
              <path d="M120 58 C120 40 140 30 150 30 C150 50 140 58 136 62 C150 62 160 72 159 76 C145 76 130 76 125 64 C124 60 122 60 120 58 Z" />
              <path d="M28 40 C32 36 40 32 39 42 C34 43 30 42 28 40 Z" />
              <path d="M166 56 L174 60 L180 62 L172 66 L168 64 Z" />
              <path d="M196 96 L200 100 L194 100 Z" />
              <path d="M210 80 L218 74 L218 88 Z" />
            </g>
            <g fill="#dfe4f0">
              <path d="M172 103 L190 95 L191 108 L180 110 Z" />
              <path d="M10 46 L20 44 L14 50 Z" />
            </g>
          </SideArt>
          {sideTop.map((item) => (
            <SideItem key={item.label} $active={item.active} $height={item.height}>
              <SideIcon>{item.icon}</SideIcon>
              <SideLabel>{item.label}</SideLabel>
              <SideArrow><ChevronLeft size={14} strokeWidth={1.8} /></SideArrow>
            </SideItem>
          ))}
          <SideGroup>
            <SideItem $height={58}>
              <SideIcon><PumpIcon /></SideIcon>
              <SideLabel>充电桩资产管理</SideLabel>
              <SideArrow><ChevronDown size={14} strokeWidth={1.8} /></SideArrow>
            </SideItem>
            <SubList>
              <SubItem>站点管理</SubItem>
              <SubItem>充电桩管理</SubItem>
            </SubList>
          </SideGroup>
          <SideItem $height={58}>
            <SideIcon><LogIcon /></SideIcon>
            <SideLabel>日志查看</SideLabel>
            <SideArrow><ChevronLeft size={14} strokeWidth={1.8} /></SideArrow>
          </SideItem>
        </Sidebar>
        <Main>
          <TabBar>
            <TabArrow><FaBackward /></TabArrow>
            <Tab $active>首页</Tab>
            <Tab>充电桩管理<FaTimesCircle /></Tab>
            <Tab>站点管理<FaTimesCircle /></Tab>
            <TabRight>
              <TabArrow><FaForward /></TabArrow>
              <CloseOps>关闭操作</CloseOps>
            </TabRight>
          </TabBar>
          <Content>
            <CardRow>
              {cards.map((c) => (
                <Card key={c.title} $from={c.from} $to={c.to} $glow={c.glow}>
                  <CardArt viewBox="0 0 248 138">{c.art}</CardArt>
                  <CardHead>
                    <span>{c.title}</span>
                    <span>今日</span>
                  </CardHead>
                  <CardNow>
                    <CardNum>0</CardNum>
                    <span>{c.unit}</span>
                  </CardNow>
                  <CardLine><CardKey>{c.key}：</CardKey><span>{c.total}</span></CardLine>
                  <CardLine><CardKey>环比增长：</CardKey><span>--</span></CardLine>
                  <CardLine><CardKey>同比增长：</CardKey><span>--</span></CardLine>
                </Card>
              ))}
            </CardRow>
            <MapPanel>
              <MapCanvas>
                <MapLayer width="1349" height="599" viewBox="0 0 1349 599">
                  <polyline points={str(wiggle(toPts(w, yangtzeWest), 3, 40, 4))} fill="none" stroke="#cfe9fb" strokeWidth="2" />
                  <polyline points={str(wiggle(toPts(e, yangtzeEast), 3, 60, 4))} fill="none" stroke="#cfe9fb" strokeWidth="2.4" />
                  <polygon points={pts(w, [1240, 480, 1262, 510, 1230, 540, 1225, 500])} fill="#bfe3fb" />
                  <polygon points={pts(w, [1205, 575, 1250, 570, 1240, 600, 1205, 590])} fill="#bfe3fb" />
                  <polygon points={str(wiggle(toPts(e, [80, 505, 130, 510, 165, 540, 130, 590, 110, 545, 80, 530]), 3, 70, 4))} fill="#bfe3fb" />
                  <polygon points={pts(e, [600, 170, 640, 160, 625, 195, 595, 195])} fill="#bfe3fb" />
                  <polygon points={str(wiggle(toPts(e, seaCoast.slice(0, -4)), 4, 90, 6).concat(toPts(e, seaCoast.slice(-4))))} fill="#bee3fc" />
                  <polygon points={pts(e, taiwan)} fill="#f9f9f9" />
                  {islands.map((s, i) => <polygon key={i} points={pts(e, s)} fill="#f9f9f9" />)}
                  <g fill="none" stroke="#ffe8bb" strokeWidth="1" strokeLinejoin="round">
                    {minorRoads.map((r, i) => <polyline key={i} points={r} />)}
                  </g>
                  <g fill="none" stroke="#ffdc93" strokeWidth="1.2" strokeLinejoin="round">
                    {westRoads.map((r, i) => <polyline key={i} points={str(wiggle(toPts(w, r), 3, i * 7 + 2, 4))} />)}
                    {eastRoads.map((r, i) => <polyline key={i} points={str(wiggle(toPts(e, r), 3, i * 9 + 3, 4))} />)}
                    {chainRoads.map((r, i) => <polyline key={i} points={r} />)}
                    {[...capitals].map((name) => <circle key={name} cx={nodes[name][0]} cy={nodes[name][1]} r="9" />)}
                  </g>
                  <g fill="none" stroke="#8d8d8d" strokeWidth="1" strokeLinejoin="round">
                    {provinceWest.map((r, i) => <polyline key={i} points={str(wiggle(toPts(w, r), 3.5, i * 13 + 5, 5))} />)}
                    {provinceEast.map((r, i) => <polyline key={i} points={str(wiggle(toPts(e, r), 3.5, i * 17 + 6, 5))} />)}
                    {maritime.map((r, i) => <polyline key={i} points={pts(e, r)} />)}
                  </g>
                  <polyline points={str(wiggle(toPts(w, [240, 1490, 300, 1445, 330, 1490, 410, 1510, 460, 1510, 480, 1540]), 2, 11, 4))} fill="none" stroke="#b7a05d" strokeWidth="2" />
                  <polyline points={pts(e, [948, 1210, 918, 1358])} fill="none" stroke="#c5a562" strokeWidth="2" />
                  {Object.entries(nodes).map(([name, p]) =>
                    capitals.has(name) ? (
                      <g key={name}>
                        <circle cx={p[0]} cy={p[1]} r="3.6" fill="#fff" stroke="#e2675c" />
                        <circle cx={p[0]} cy={p[1]} r="1.6" fill="#e2675c" />
                      </g>
                    ) : (
                      <circle key={name} cx={p[0]} cy={p[1]} r="3.2" fill="#e8685c" stroke="#f4a49c" strokeWidth=".6" />
                    )
                  )}
                </MapLayer>
                {westCities.map((c) => {
                  const p = w(c[3], c[4]);
                  return <CityName key={c[0]} $cap={!!c[5]} style={{ left: p[0], top: p[1] }}>{c[0]}</CityName>;
                })}
                {eastCities.map((c) => {
                  const p = e(c[3], c[4]);
                  return <CityName key={c[0]} $cap={!!c[5]} style={{ left: p[0], top: p[1] }}>{c[0]}</CityName>;
                })}
                {regions.map(([name, x, y]) => {
                  const p = w(x, y);
                  return <RegionName key={name} style={{ left: p[0], top: p[1] }}>{name}</RegionName>;
                })}
                {[["杭州湾", 821, 322], ["东海", 1091, 746], ["台湾海峡", 479, 1349]].map(([name, x, y]) => {
                  const p = e(x as number, y as number);
                  return <SeaName key={name} style={{ left: p[0], top: p[1] }}>{name}</SeaName>;
                })}
                {[["钓鱼岛", 1023, 1046], ["赤尾屿", 1165, 1077]].map(([name, x, y]) => {
                  const p = e(x as number, y as number);
                  return <SeaName key={name} $small style={{ left: p[0], top: p[1] }}>{name}</SeaName>;
                })}
                {pins.map((pin, i) => (
                  <Pin key={i} viewBox="0 0 20 26" style={{ left: pin.at[0], top: pin.at[1] }}>
                    {pin.shadow && <ellipse cx="20" cy="21" rx="9" ry="3.5" fill="#4a4a4a" transform="rotate(-20 20 21)" />}
                    <path d="M10 1 C4.5 1 1 5 1 10 C1 16 7 21 10 26 C13 21 19 16 19 10 C19 5 15.5 1 10 1 Z" fill="#ee2a2f" />
                    <path d="M4 10 C3.5 5.5 7 3 10 2.5 C6 4.5 5 7 4 10 Z" fill="#f97a7a" />
                  </Pin>
                ))}
                <BaiduLogo>
                  <BaiduWord>Bai</BaiduWord>
                  <svg width="26" height="25" viewBox="0 0 24 24" fill="#1c22d8">
                    <ellipse cx="5" cy="11" rx="2.6" ry="3.4" />
                    <ellipse cx="9.5" cy="5" rx="2.6" ry="3.8" />
                    <ellipse cx="15.5" cy="5" rx="2.6" ry="3.8" />
                    <ellipse cx="20" cy="11" rx="2.6" ry="3.4" />
                    <path d="M12.5 10 C16 10 21 16 20 21 C19 24 15 23.5 12.5 23.5 C10 23.5 6 24 5 21 C4 16 9 10 12.5 10 Z" />
                    <text x="12.5" y="21" textAnchor="middle" fontSize="9" fill="#fff">du</text>
                  </svg>
                  <BaiduMap>地图</BaiduMap>
                </BaiduLogo>
                <CopyRight>
                  © 2020 Baidu - GS(2019)5218号 - 甲测资字1100930 - 京ICP证030173号 - Data © 长地万方 &amp; <CopyLink>OpenStreetMap</CopyLink> &amp; <CopyLink>HERE</CopyLink>
                </CopyRight>
              </MapCanvas>
              <StatusPanel>
                <StatusHead>
                  <MapPin size={16} color="#3aa8f0" strokeWidth={1.4} />
                  <StatusTitle>设备状态</StatusTitle>
                  <svg width="14" height="12" viewBox="0 0 14 12" fill="#bdbdbd">
                    <rect y="0" width="14" height="2" />
                    <rect y="3.3" width="14" height="2" />
                    <rect y="6.6" width="14" height="2" />
                    <rect y="10" width="14" height="2" />
                  </svg>
                </StatusHead>
                <Legend>
                  {legend.map((l) => (
                    <LegendItem key={l.name}>
                      <LegendDot $color={l.color} />
                      {l.name}
                    </LegendItem>
                  ))}
                </Legend>
                <DonutBox viewBox="0 5 272 212">
                  <path d={slicePath(136, 103, 46, 64, 0, 37)} fill={donutColors.idle} />
                  <path d={slicePath(136, 103, 46, 64, 37, 39)} fill={donutColors.busy} />
                  <path d={slicePath(136, 103, 46, 64, 39, 48)} fill={donutColors.fault} />
                  <path d={slicePath(136, 103, 46, 64, 48, 68)} fill={donutColors.off} />
                  <g fill="none" strokeWidth="1">
                    <path d="M58 56 H73 L85 65" stroke={donutColors.off} />
                    <path d="M200 113 L212 115 H226" stroke={donutColors.idle} />
                    <path d="M61 154 H75 L87 145" stroke={donutColors.fault} />
                    <path d="M81 177 H96 L113 163" stroke={donutColors.busy} />
                  </g>
                  <g fontSize="12" fontFamily="'Noto Sans CJK SC', sans-serif">
                    <text x="31" y="60" fill={donutColors.off}>离线</text>
                    <text x="229" y="119" fill={donutColors.idle}>空闲</text>
                    <text x="33" y="158" fill={donutColors.fault}>故障</text>
                    <text x="41" y="181" fill={donutColors.busy}>充电中</text>
                  </g>
                </DonutBox>
                <StatList>
                  {stats.map((s) => (
                    <StatBox key={s.name}>
                      <StatText>
                        <span>{s.count}/68</span>
                        <span>{s.name}</span>
                      </StatText>
                      <StatTrack>
                        <StatFill style={{ width: `${Math.max((s.count / 68) * 100, s.count ? 2.5 : 0)}%` }} />
                      </StatTrack>
                    </StatBox>
                  ))}
                </StatList>
              </StatusPanel>
            </MapPanel>
          </Content>
          <Footer>© 2003 - 2020 ©Acrel</Footer>
        </Main>
      </Body>
    </Page>
  );
};

export default App;
